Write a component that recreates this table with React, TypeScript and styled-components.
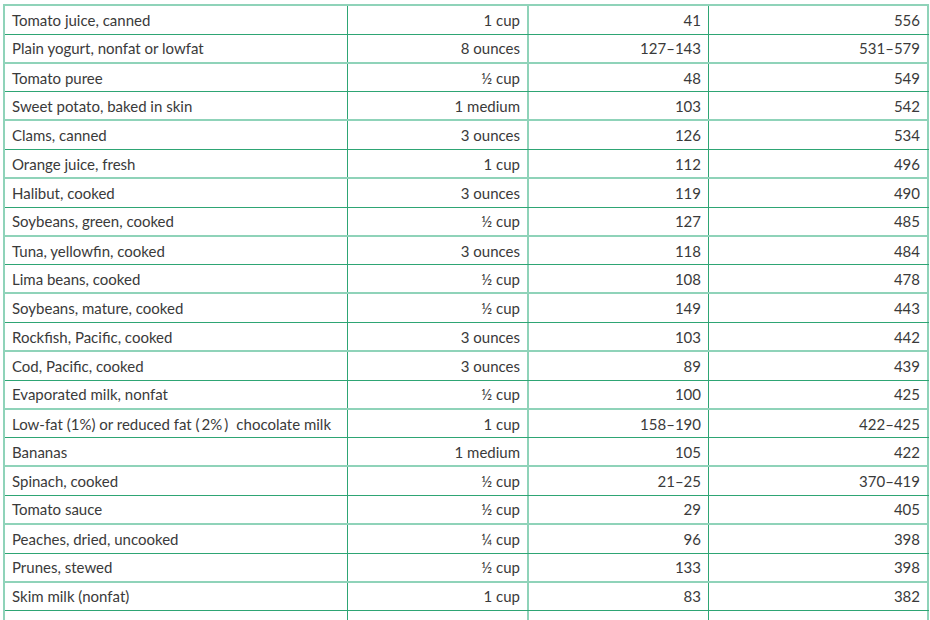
import React from "react";
import styled, { createGlobalStyle } from "styled-components";

const Global = createGlobalStyle`
  html, body { margin: 0; padding: 0; background: #ffffff; }
  body { font-family: "Lato", "Noto Sans", sans-serif; }
`;

const LIGHT = "#8fd3b9";
const DARK = "#2ea574";

const Inner = styled.span`
  padding: 0 2px;
`;

const Tail = styled.span`
  margin-left: 8px;
`;

type Row = [React.ReactNode, string, string, string];

const rows: Row[] = [
  ["Tomato juice, canned", "1 cup", "41", "556"],
  ["Plain yogurt, nonfat or lowfat", "8 ounces", "127–143", "531–579"],
  ["Tomato puree", "½ cup", "48", "549"],
  ["Sweet potato, baked in skin", "1 medium", "103", "542"],
  ["Clams, canned", "3 ounces", "126", "534"],
  ["Orange juice, fresh", "1 cup", "112", "496"],
  ["Halibut, cooked", "3 ounces", "119", "490"],
  ["Soybeans, green, cooked", "½ cup", "127", "485"],
  ["Tuna, yellowfin, cooked", "3 ounces", "118", "484"],
  ["Lima beans, cooked", "½ cup", "108", "478"],
  ["Soybeans, mature, cooked", "½ cup", "149", "443"],
  ["Rockfish, Pacific, cooked", "3 ounces", "103", "442"],
  ["Cod, Pacific, cooked", "3 ounces", "89", "439"],
  ["Evaporated milk, nonfat", "½ cup", "100", "425"],
  [
    <>
      Low-fat (1%) or reduced fat{"\u00a0"}(<Inner>2%</Inner>)<Tail>chocolate milk</Tail>
    </>,
    "1 cup",
    "158–190",
    "422–425",
  ],
  ["Bananas", "1 medium", "105", "422"],
  ["Spinach, cooked", "½ cup", "21–25", "370–419"],
  ["Tomato sauce", "½ cup", "29", "405"],
  ["Peaches, dried, uncooked", "¼ cup", "96", "398"],
  ["Prunes, stewed", "½ cup", "133", "398"],
  ["Skim milk (nonfat)", "1 cup", "83", "382"],
  ["", "", "", ""],
];

const Page = styled.div`
  padding-top: 4px;
`;

const Table = styled.div`
  margin-left: 3px;
  width: 926px;
  border-left: 2px solid ${LIGHT};
  border-top: 2px solid ${LIGHT};
  box-sizing: border-box;
`;

const RowLine = styled.div<{ $light: boolean }>`
  display: grid;
  grid-template-columns: 343px 181px 180px 220px;
  height: 28.83px;
  box-sizing: border-box;
  border-bottom: ${(p) => (p.$light ? `2px solid ${LIGHT}` : `1px solid ${DARK}`)};
`;

const Cell = styled.div<{ $align: "left" | "right"; $edge: "dark" | "light" }>`
  display: flex;
  align-items: center;
  justify-content: ${(p) => (p.$align === "left" ? "flex-start" : "flex-end")};
  box-sizing: border-box;
  padding-left: ${(p) => (p.$align === "left" ? "7px" : "0")};
  padding-right: ${(p) => (p.$align === "right" ? "7px" : "0")};
  border-right: ${(p) => (p.$edge === "light" ? `2px solid ${LIGHT}` : `1px solid ${DARK}`)};
  font-size: 15px;
  color: #3a3a3a;
  white-space: pre;
`;

const edges: ("dark" | "light")[] = ["dark", "light", "dark", "light"];

export default function App() {
  return (
    <>
      <Global />
      <Page>
        <Table>
          {rows.map((r, i) => (
            <RowLine key={i} $light={i % 2 === 1}>
              {r.map((c, j) => (
                <Cell key={j} $align={j === 0 ? "left" : "right"} $edge={edges[j]}>
                  {j === 0 ? <span>{c}</span> : c}
                </Cell>
              ))}
            </RowLine>
          ))}
        </Table>
      </Page>
    </>
  );
}
